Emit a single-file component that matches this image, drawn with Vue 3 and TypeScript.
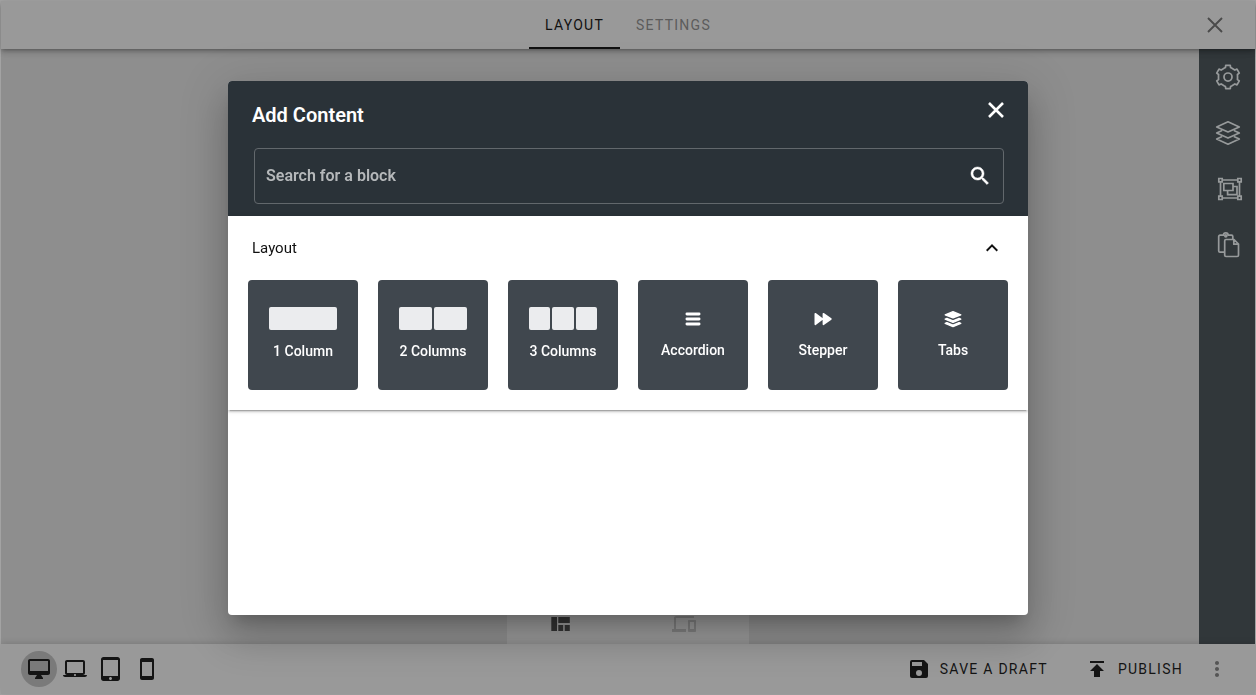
<script setup lang="ts">
import { computed, ref } from 'vue'

interface Block {
  label: string
  columns?: number
  icon?: 'bars' | 'forward' | 'layers'
}

const blocks: Block[] = [
  { label: '1 Column', columns: 1 },
  { label: '2 Columns', columns: 2 },
  { label: '3 Columns', columns: 3 },
  { label: 'Accordion', icon: 'bars' },
  { label: 'Stepper', icon: 'forward' },
  { label: 'Tabs', icon: 'layers' },
]

const devices = [
  {
    name: 'Desktop',
    path: 'M21 2H3c-1.1 0-2 .9-2 2v12c0 1.1.9 2 2 2h7l-2 3v1h8v-1l-2-3h7c1.1 0 2-.9 2-2V4c0-1.1-.9-2-2-2zm0 12H3V4h18v10z',
  },
  {
    name: 'Laptop',
    path: 'M20 18c1.1 0 1.99-.9 1.99-2L22 5c0-1.1-.9-2-2-2H4c-1.1 0-2 .9-2 2v11c0 1.1.9 2 2 2H0c0 1.1.9 2 2 2h20c1.1 0 2-.9 2-2h-4zM4 5h16v11H4V5zm8 14c-.55 0-1-.45-1-1s.45-1 1-1 1 .45 1 1-.45 1-1 1z',
  },
  {
    name: 'Tablet',
    path: 'M18.5 0h-14C3.12 0 2 1.12 2 2.5v19C2 22.88 3.12 24 4.5 24h14c1.38 0 2.5-1.12 2.5-2.5v-19C21 1.12 19.88 0 18.5 0zm-7 23c-.83 0-1.5-.67-1.5-1.5s.67-1.5 1.5-1.5 1.5.67 1.5 1.5-.67 1.5-1.5 1.5zm7.5-4H4V3h15v16z',
  },
  {
    name: 'Phone',
    path: 'M17 1.01L7 1c-1.1 0-1.99.9-1.99 2v18c0 1.1.89 2 1.99 2h10c1.1 0 2-.9 2-2V3c0-1.1-.9-1.99-2-1.99zM17 19H7V5h10v14z',
  },
]

const device = ref('Desktop')
const query = ref('')
const expanded = ref(true)

const shownBlocks = computed(() =>
  blocks.filter((b) => b.label.toLowerCase().includes(query.value.trim().toLowerCase())),
)

// Outline of a six-toothed gear centred in a 24 unit box.
function gearOutline(): string {
  const profile = [
    [-3.7, 8],
    [-2.4, 8.7],
    [-2.1, 10.8],
    [2.1, 10.8],
    [2.4, 8.7],
    [3.7, 8],
  ]
  const points: string[] = []
  for (let tooth = 0; tooth < 6; tooth++) {
    const a = (tooth * Math.PI) / 3
    for (const [u, r] of profile) {
      const x = 12 + u * Math.cos(a) + r * Math.sin(a)
      const y = 12 + u * Math.sin(a) - r * Math.cos(a)
      points.push(`${x.toFixed(2)} ${y.toFixed(2)}`)
    }
  }
  return `M${points.join('L')}Z`
}
const gear = gearOutline()
</script>

<template>
  <div class="editor">
    <header class="topbar">
      <nav class="tabs">
        <button class="tab active" type="button">LAYOUT</button>
        <button class="tab" type="button">SETTINGS</button>
      </nav>
      <button class="exit" type="button" aria-label="Close editor">
        <svg width="24" height="24" viewBox="0 0 24 24" fill="none" stroke="currentColor" stroke-width="1.9">
          <path d="M5 5l14 14M19 5L5 19" />
        </svg>
      </button>
    </header>

    <main class="workspace">
      <div class="viewbar">
        <button type="button" aria-label="Grid view">
          <svg width="24" height="24" viewBox="0 0 24 24" fill="currentColor">
            <path d="M2.300 5H8v14H2.300zM9.300 5H20.800v6H9.300zM9.300 13h4.900v6H9.300zM15.700 13h5.100v6h-5.100z" />
          </svg>
        </button>
        <button class="muted" type="button" aria-label="Device view">
          <svg width="24" height="24" viewBox="0 0 24 24" fill="currentColor">
            <path d="M4 6h18V4H4c-1.100 0-2 .9-2 2v11H0v3h14v-3H4V6zm19 2h-6c-.55 0-1 .45-1 1v10c0 .55.45 1 1 1h6c.55 0 1-.45 1-1V9c0-.55-.45-1-1-1zm-1 9h-4v-7h4v7z" />
          </svg>
        </button>
      </div>
      <aside class="tools">
        <button type="button" aria-label="Options">
          <svg width="26" height="26" viewBox="0 0 24 24" fill="none" stroke="currentColor" stroke-width="1.600" stroke-linejoin="round">
            <path :d="gear" />
            <circle cx="12" cy="12" r="3.700" />
          </svg>
        </button>
        <button type="button" aria-label="Layers">
          <svg width="26" height="26" viewBox="0 0 26 26" fill="none" stroke="currentColor" stroke-width="1.700" stroke-linejoin="round" stroke-linecap="round">
            <path d="M13 1.800L24.300 6.900 13 12 1.700 6.900z" />
            <path d="M6.600 10.700L1.700 13 13 18.100 24.300 13l-4.900-2.300" />
            <path d="M6.600 16.800L1.700 19.100 13 24.200l11.300-5.100-4.900-2.300" />
          </svg>
        </button>
        <button class="group" type="button" aria-label="Group">
          <svg width="26" height="26" viewBox="0 0 26 26" fill="none" stroke="currentColor" stroke-width="1.700">
            <path d="M5 4h16M5 22h16M3.500 5.500v15M22.500 5.500v15" />
            <path d="M1.800 2.500h3.400v3.400H1.800zM20.800 2.500h3.400v3.400h-3.400zM1.800 20.100h3.400v3.400H1.800zM20.800 20.100h3.400v3.400h-3.400z" />
            <path d="M6.800 7.500h9.200v7H6.800z" />
            <path d="M16 10.500h4v8.200h-9.400v-4" />
          </svg>
        </button>
        <button type="button" aria-label="Paste">
          <svg width="26" height="26" viewBox="0 0 26 26" fill="none" stroke="currentColor" stroke-width="1.700" stroke-linejoin="round">
            <path d="M9.500 20.200H5a1.300 1.300 0 0 1-1.300-1.300V4.500A1.300 1.300 0 0 1 5 3.200H8.500a2.300 2.300 0 0 1 4.600 0H16.500a1.300 1.300 0 0 1 1.300 1.300V7.500" />
            <path d="M11 7.500H19l4.500 4.500v11.200a1.300 1.300 0 0 1-1.300 1.300H11a1.300 1.300 0 0 1-1.300-1.300V8.800A1.300 1.300 0 0 1 11 7.500zM18.800 7.700v4.500h4.500" />
            <circle cx="10.800" cy="3.800" r="1" />
          </svg>
        </button>
      </aside>
    </main>

    <footer class="bottombar">
      <div class="devices">
        <button
          v-for="d in devices"
          :key="d.name"
          type="button"
          :class="{ chosen: device === d.name }"
          :aria-label="d.name"
          @click="device = d.name"
        >
          <svg width="24" height="24" viewBox="0 0 24 24" fill="currentColor"><path :d="d.path" /></svg>
        </button>
      </div>
      <div class="actions">
        <button class="action" type="button">
          <svg width="24" height="24" viewBox="0 0 24 24" fill="currentColor">
            <path d="M15 9H5V5h10m-3 14a3 3 0 0 1-3-3 3 3 0 0 1 3-3 3 3 0 0 1 3 3 3 3 0 0 1-3 3m5-16H5a2 2 0 0 0-2 2v14a2 2 0 0 0 2 2h14a2 2 0 0 0 2-2V7l-4-4z" />
          </svg>
          SAVE A DRAFT
        </button>
        <button class="action" type="button">
          <svg width="24" height="24" viewBox="0 0 24 24" fill="currentColor">
            <path d="M5 4v2h14V4H5zm0 10h4v6h6v-6h4l-7-7-7 7z" />
          </svg>
          PUBLISH
        </button>
        <button class="more" type="button" aria-label="More actions">
          <svg width="24" height="24" viewBox="0 0 24 24" fill="currentColor">
            <path d="M12 8c1.100 0 2-.9 2-2s-.9-2-2-2-2 .9-2 2 .9 2 2 2zm0 2c-1.100 0-2 .9-2 2s.9 2 2 2 2-.9 2-2-.9-2-2-2zm0 6c-1.100 0-2 .9-2 2s.9 2 2 2 2-.9 2-2-.9-2-2-2z" />
          </svg>
        </button>
      </div>
    </footer>

    <div class="overlay">
      <section class="dialog" role="dialog" aria-labelledby="dialog-title">
        <div class="dialog-head">
          <div class="title-row">
            <h1 id="dialog-title">Add Content</h1>
            <button class="close" type="button" aria-label="Close">
              <svg width="24" height="24" viewBox="0 0 24 24" fill="none" stroke="currentColor" stroke-width="2.600">
                <path d="M5 5l14 14M19 5L5 19" />
              </svg>
            </button>
          </div>
          <div class="search">
            <input v-model="query" type="text" placeholder="Search for a block" aria-label="Search for a block" />
            <svg width="24" height="24" viewBox="0 0 24 24" fill="currentColor" stroke="currentColor" stroke-width=".5">
              <path d="M15.500 14h-.79l-.28-.27C15.410 12.590 16 11.110 16 9.500 16 5.910 13.090 3 9.500 3S3 5.910 3 9.500 5.910 16 9.500 16c1.610 0 3.090-.59 4.230-1.570l.27.28v.79l5 4.990L20.490 19l-4.990-5zm-6 0C7.010 14 5 11.990 5 9.500S7.010 5 9.500 5 14 7.010 14 9.500 11.990 14 9.500 14z" />
            </svg>
          </div>
        </div>

        <div class="panel">
          <button class="panel-head" type="button" :aria-expanded="expanded" @click="expanded = !expanded">
            <span>Layout</span>
            <svg width="24" height="24" viewBox="0 0 24 24" fill="currentColor">
              <path d="M12 8l-6 6 1.410 1.410L12 10.830l4.590 4.580L18 14z" />
            </svg>
          </button>
          <div v-if="expanded" class="tiles">
            <button v-for="b in shownBlocks" :key="b.label" class="tile" type="button">
              <span v-if="b.columns" class="cols"><i v-for="n in b.columns" :key="n"></i></span>
              <svg v-else-if="b.icon === 'bars'" class="glyph" viewBox="0 0 22 22" fill="none" stroke="currentColor" stroke-width="2.800" stroke-linecap="round">
                <path d="M4.900 6h12.200M4.900 11h12.200M4.900 16h12.200" />
              </svg>
              <svg v-else-if="b.icon === 'forward'" class="glyph" viewBox="0 0 22 22" fill="currentColor" stroke="currentColor" stroke-width="1.600" stroke-linejoin="round">
                <path d="M3.300 5.700L10.200 11l-6.900 5.300zM11.400 5.700L18.900 11l-7.500 5.300z" />
              </svg>
              <svg v-else class="glyph" viewBox="0 0 22 22" fill="currentColor" stroke="currentColor" stroke-width="1.300" stroke-linejoin="round">
                <path d="M11 3.700l7.800 3.100-7.800 3.100-7.800-3.100z" />
                <path d="M4.900 10.400L3.200 11.200l7.800 3.300 7.800-3.300-1.700-.8L11 12.800z" />
                <path d="M4.900 14.600L3.200 15.400l7.800 3.300 7.800-3.300-1.700-.8L11 17z" />
              </svg>
              <span class="label">{{ b.label }}</span>
            </button>
          </div>
        </div>
      </section>
    </div>
  </div>
</template>

<style>
body {
  margin: 0;
}
</style>

<style scoped>
.editor {
  box-sizing: border-box;
  display: grid;
  grid-template-rows: 48px 1fr 50px;
  height: 100vh;
  border: 1px solid #a3a3a3;
  background: #8e8e8e;
  font-family: Roboto, "Liberation Sans", sans-serif;
  color: #141414;
}

button {
  display: flex;
  align-items: center;
  justify-content: center;
  margin: 0;
  padding: 0;
  border: 0;
  background: none;
  color: inherit;
  font: inherit;
  cursor: pointer;
}

svg {
  display: block;
  flex: none;
}

.topbar {
  z-index: 1;
  display: grid;
  grid-template-columns: 1fr auto 1fr;
  background: #999;
  box-shadow: 0 2px 4px -1px rgba(0, 0, 0, 0.3), 0 4px 5px rgba(0, 0, 0, 0.1), 0 1px 10px rgba(0, 0, 0, 0.08);
}

.tabs {
  grid-column: 2;
  display: flex;
}

.tab {
  padding: 0 16px;
  border-top: 2px solid transparent;
  border-bottom: 2px solid transparent;
  color: #5c5c5c;
  font-size: 14px;
  letter-spacing: 0.09em;
}

.tab.active {
  border-bottom-color: #111;
  color: #111;
}

.exit {
  justify-self: end;
  width: 48px;
  margin-right: 16px;
  color: #4a4a4a;
}

.workspace {
  display: grid;
  grid-template-columns: 56px 1fr 56px;
}

.viewbar {
  grid-column: 2;
  align-self: end;
  justify-self: center;
  box-sizing: border-box;
  display: flex;
  justify-content: space-between;
  width: 242px;
  height: 40px;
  padding: 0 53px 0 42px;
  background: #999;
  color: #333;
}

.viewbar .muted {
  color: #7e7e7e;
}

.tools {
  display: flex;
  flex-direction: column;
  background: #31373a;
  color: #979a9b;
}

.tools button {
  width: 56px;
  height: 56px;
  padding-left: 2px;
}

.tools .group {
  padding-left: 6px;
}

.bottombar {
  z-index: 1;
  display: flex;
  align-items: center;
  justify-content: space-between;
  padding: 0 26px 0 20px;
  background: #999;
  box-shadow: 0 -1px 6px rgba(0, 0, 0, 0.14);
}

.devices {
  display: flex;
}

.devices button {
  width: 36px;
  height: 36px;
  border-radius: 50%;
}

.devices .chosen {
  background: #7a7a7a;
}

.actions {
  display: flex;
  align-items: center;
}

.action {
  gap: 9px;
  font-size: 14px;
  letter-spacing: 0.09em;
}

.action + .action {
  margin-left: 37px;
}

.more {
  margin-left: 22px;
  color: #555;
}

.overlay {
  position: fixed;
  inset: 0;
  z-index: 2;
  display: flex;
  justify-content: center;
  padding: 81px 24px 80px;
}

.dialog {
  width: 100%;
  max-width: 800px;
  overflow: hidden;
  border-radius: 4px;
  background: #fff;
  box-shadow: 0 11px 15px -7px rgba(0, 0, 0, 0.2), 0 24px 38px 3px rgba(0, 0, 0, 0.14), 0 9px 46px 8px rgba(0, 0, 0, 0.12);
}

.dialog-head {
  padding: 17px 24px 12px;
  background: #2a3238;
  color: #fff;
}

.title-row {
  display: flex;
  justify-content: space-between;
  height: 50px;
}

h1 {
  margin: 0;
  font-size: 20px;
  font-weight: 600;
  line-height: 34px;
}

.close {
  width: 24px;
  height: 24px;
  margin-right: -4px;
}

.search {
  box-sizing: border-box;
  display: flex;
  align-items: center;
  height: 56px;
  margin-left: 2px;
  padding: 0 11px;
  border: 1px solid #62686c;
  border-radius: 4px;
}

.search input {
  flex: 1;
  min-width: 0;
  padding: 0;
  border: 0;
  outline: 0;
  background: none;
  color: #fff;
  font: 600 16px/24px Roboto, "Liberation Sans", sans-serif;
}

.search input::placeholder {
  color: #b5b8ba;
  opacity: 1;
}

.panel {
  box-shadow: 0 3px 1px -2px rgba(0, 0, 0, 0.2), 0 2px 2px rgba(0, 0, 0, 0.14), 0 1px 5px rgba(0, 0, 0, 0.12);
}

.panel-head {
  justify-content: space-between;
  width: 100%;
  height: 64px;
  padding: 0 24px;
  color: #111;
  font-size: 15px;
}

.tiles {
  display: grid;
  grid-template-columns: repeat(6, 1fr);
  gap: 20px;
  padding: 0 20px 20px;
}

.tile {
  flex-direction: column;
  gap: 8px;
  height: 110px;
  border-radius: 4px;
  background: #40474e;
  color: #fff;
}

.cols {
  display: flex;
  gap: 2px;
  width: 68px;
  height: 23px;
  margin-bottom: 1px;
}

.cols i {
  flex: 1;
  border-radius: 2px;
  background: #ebecee;
}

.glyph {
  width: 22px;
  height: 22px;
}

.label {
  font-size: 14px;
  font-weight: 500;
  line-height: 24px;
}
</style>
